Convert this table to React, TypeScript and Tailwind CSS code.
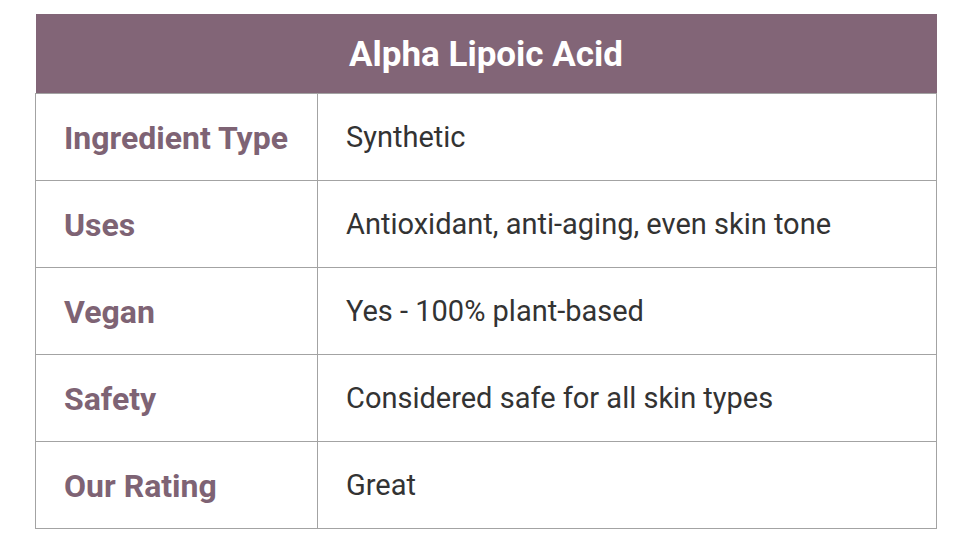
const rows = [
  { label: 'Ingredient Type', value: 'Synthetic' },
  { label: 'Uses', value: 'Antioxidant, anti-aging, even skin tone' },
  { label: 'Vegan', value: 'Yes - 100% plant-based' },
  { label: 'Safety', value: 'Considered safe for all skin types' },
  { label: 'Our Rating', value: 'Great' },
];

export default function App() {
  return (
    <div className="min-h-screen w-full bg-white pt-[14px] pl-[35px]" style={{ fontFamily: 'Roboto, "Liberation Sans", sans-serif' }}>
      <table className="w-[902px] border-collapse table-fixed">
        <colgroup>
          <col className="w-[282px]" />
          <col />
        </colgroup>
        <thead>
          <tr>
            <th colSpan={2} className="h-[79px] bg-[#826577] pt-[4px] text-center text-[35px] font-bold text-white">
              Alpha Lipoic Acid
            </th>
          </tr>
        </thead>
        <tbody>
          {rows.map((row) => (
            <tr key={row.label} className="h-[87px]">
              <td className="border border-[#a3a3a3] pl-[28px] pt-[2px] text-left text-[32px] font-bold text-[#7e6374] whitespace-nowrap">
                {row.label}
              </td>
              <td className="border border-[#a3a3a3] pl-[28px] pt-[2px] text-left text-[29px] text-[#333333] whitespace-nowrap">
                {row.value}
              </td>
            </tr>
          ))}
        </tbody>
      </table>
    </div>
  );
}
